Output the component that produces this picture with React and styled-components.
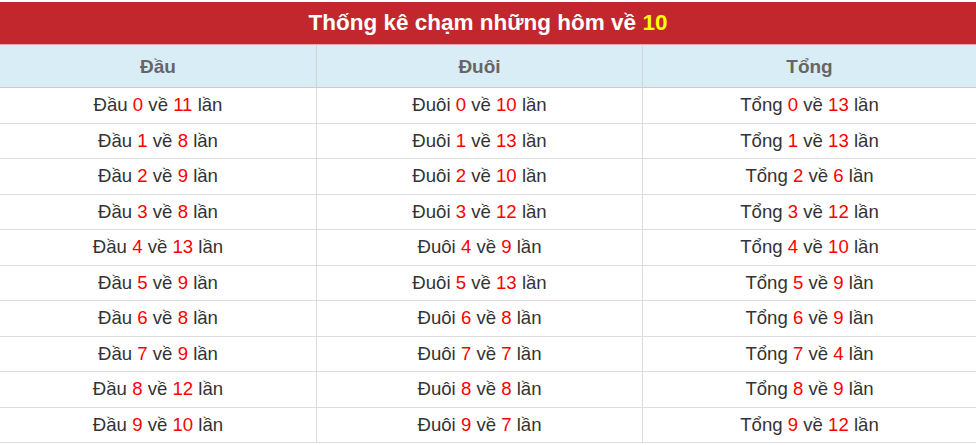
import React from "react";
import styled, { createGlobalStyle } from "styled-components";

const GlobalStyle = createGlobalStyle`
  body {
    margin: 0;
    background: #fff;
    font-family: "Liberation Sans", Arial, sans-serif;
  }
`;

const Wrapper = styled.div`
  padding-top: 2px;
  width: 976px;
`;

const TitleBar = styled.div`
  height: 42px;
  background: #c1272d;
  color: #fff;
  font-size: 22.5px;
  font-weight: bold;
  display: flex;
  align-items: center;
  justify-content: center;
  border-bottom: 1px solid #e8a9ab;
`;

const Highlight = styled.span`
  color: #ffff00;
`;

const Grid = styled.div`
  display: grid;
  grid-template-columns: 316px 326px 1fr;
`;

const HeadCell = styled.div`
  height: 43px;
  padding-top: 2px;
  box-sizing: border-box;
  background: #d9edf7;
  color: #666;
  font-size: 19px;
  font-weight: bold;
  display: flex;
  align-items: center;
  justify-content: center;
  border-bottom: 1px solid #ccc;
  border-left: ${(p) => (p.$first ? "none" : "1px solid #d4d4d4")};
`;

const Cell = styled.div`
  height: 34.5px;
  color: #333;
  font-size: 18.6px;
  display: flex;
  align-items: center;
  justify-content: center;
  border-bottom: 1px solid #ddd;
  border-left: ${(p) => (p.$first ? "none" : "1px solid #ddd")};
`;

const Num = styled.span`
  color: #ff0000;
`;

const dau = [11, 8, 9, 8, 13, 9, 8, 9, 12, 10];
const duoi = [10, 13, 10, 12, 9, 13, 8, 7, 8, 7];
const tong = [13, 13, 6, 12, 10, 9, 9, 4, 9, 12];

const Entry = ({ label, digit, count }) => (
  <span>
    {label} <Num>{digit}</Num> về <Num>{count}</Num> lần
  </span>
);

export default function App() {
  return (
    <>
      <GlobalStyle />
      <Wrapper>
        <TitleBar>
          <span>
            Thống kê chạm những hôm về <Highlight>10</Highlight>
          </span>
        </TitleBar>
        <Grid>
          <HeadCell $first>Đầu</HeadCell>
          <HeadCell>Đuôi</HeadCell>
          <HeadCell>Tổng</HeadCell>
          {dau.map((_, i) => (
            <React.Fragment key={i}>
              <Cell $first>
                <Entry label="Đầu" digit={i} count={dau[i]} />
              </Cell>
              <Cell>
                <Entry label="Đuôi" digit={i} count={duoi[i]} />
              </Cell>
              <Cell>
                <Entry label="Tổng" digit={i} count={tong[i]} />
              </Cell>
            </React.Fragment>
          ))}
        </Grid>
      </Wrapper>
    </>
  );
}
